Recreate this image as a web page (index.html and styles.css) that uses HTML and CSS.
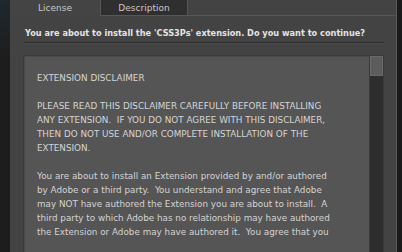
FILE: index.html
```html
<!DOCTYPE html>
<html>
<head>
<meta charset="utf-8">
<link rel="stylesheet" href="styles.css">
</head>
<body>
<div class="screen">
  <div class="side"></div>
  <div class="window">
    <div class="tabs">
      <div class="tab active">License</div>
      <div class="tab">Description</div>
      <div class="tab-fill"></div>
    </div>
    <div class="heading">You are about to install the 'CSS3Ps' extension. Do you want to continue?</div>
    <div class="sep"></div>
    <div class="box">
      <div class="text">EXTENSION DISCLAIMER

PLEASE READ THIS DISCLAIMER CAREFULLY BEFORE INSTALLING
ANY EXTENSION.  IF YOU DO NOT AGREE WITH THIS DISCLAIMER,
THEN DO NOT USE AND/OR COMPLETE INSTALLATION OF THE
EXTENSION.

You are about to install an Extension provided by and/or authored
by Adobe or a third party.  You understand and agree that Adobe
may NOT have authored the Extension you are about to install.  A
third party to which Adobe has no relationship may have authored
the Extension or Adobe may have authored it.  You agree that you</div>
      <div class="scroll"><div class="thumb"></div></div>
    </div>
  </div>
  <div class="side-right"></div>
</div>
</body>
</html>
```
FILE: styles.css
```css
html, body {
  margin: 0;
  padding: 0;
  background: #1c1c1c;
}
.screen {
  width: 402px;
  height: 252px;
  overflow: hidden;
  display: flex;
}
.side {
  width: 10px;
  flex: none;
  background: linear-gradient(#1f282d 0, #1e2226 30px, #1d1d1d 60px);
}
.window {
  width: 386px;
  flex: none;
  background: #434343;
  border-right: 1px solid #5a5a5a;
  display: flex;
  flex-direction: column;
}
.side-right {
  flex: 1;
  background: #1a1a1a;
}
.tabs {
  display: flex;
  height: 16px;
  flex: none;
}
.tab {
  font-family: "DejaVu Sans", sans-serif;
  font-size: 9px;
  color: #c8c8c8;
  display: flex;
  align-items: center;
  justify-content: center;
  box-sizing: border-box;
}
.tab.active {
  width: 90px;
  background: #444;
}
.tab:not(.active) {
  width: 88px;
  background: #2f2f2f;
  border: 1px solid #575757;
  border-top: none;
}
.tab-fill {
  flex: 1;
  border-bottom: 1px solid #575757;
}
.heading {
  font-family: "DejaVu Sans", sans-serif;
  font-weight: bold;
  font-size: 8.2px;
  color: #e4e4e4;
  padding: 12px 0 0 15px;
  height: 14px;
  white-space: nowrap;
}
.sep {
  margin: 0 12px 0 14px;
  height: 1px;
  background: #2e2e2e;
  border-bottom: 1px solid #4a4a4a;
}
.box {
  margin: 11px 12px 0 13px;
  flex: 1;
  display: flex;
  background: #555;
  border: 1px solid #3a3a3a;
  border-bottom: none;
  box-shadow: inset 1px 1px 0 #4a4a4a;
  min-height: 0;
  overflow: hidden;
}
.text {
  flex: 1;
  white-space: pre;
  font-family: "DejaVu Sans", sans-serif;
  font-size: 8.8px;
  line-height: 14px;
  color: #d4d4d4;
  padding: 15px 0 0 13px;
}
.scroll {
  width: 13px;
  flex: none;
  background: #2d2d2d;
  border-left: 1px solid #3a3a3a;
}
.thumb {
  height: 20px;
  background: #5c5c5c;
  border: 1px solid #6a6a6a;
  box-sizing: border-box;
}
```
